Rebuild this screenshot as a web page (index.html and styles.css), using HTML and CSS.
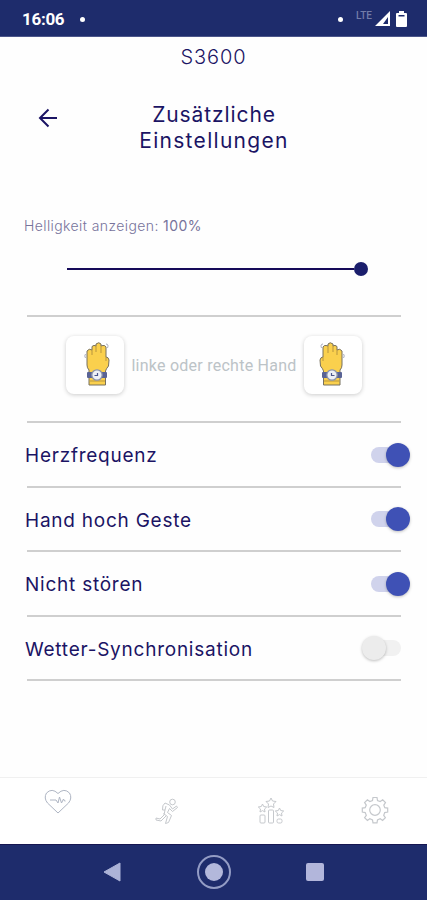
FILE: index.html
```html
<!DOCTYPE html>
<html lang="de">
<head>
    <meta charset="UTF-8">
    <meta name="viewport" content="width=device-width, initial-scale=1">
    <title>Zusätzliche Einstellungen</title>
    <link rel="stylesheet" href="styles.css">
</head>
<body>
<svg width="0" height="0" class="sprite">
    <symbol id="hand" viewBox="0 0 28 46">
        <path d="M6 28V43H22.500V29Q23 27 25.500 24L26 18Q25.500 15 23 15V5Q22 3 20 3.500L18 4V2Q16-.500 13 2V4Q11 2.500 9 4.500V8Q6 6 4 9V23Q4 26 6 28Z" fill="#fad04d" stroke="#77705f" stroke-width="1"/>
        <path d="M9 8v5M13 4v6M18 4v7M23 15v4M7 39h15" fill="none" stroke="#b8953e" stroke-width="1"/>
        <path d="M23 2q3 0 1.500 4M2.500 12q-1.500 2 0 4" fill="none" stroke="#aaaec0" stroke-width="1"/>
        <rect x="4" y="30" width="20" height="6" rx="1" fill="#596395"/>
        <circle cx="14" cy="33" r="5.200" fill="#eef0f6" stroke="#8991aa" stroke-width="1.300"/>
        <path d="M14.500 31v2.500h-3" fill="none" stroke="#4c568c" stroke-width="1.200"/>
    </symbol>
</svg>

<header class="status-bar">
    <span class="clock">16:06</span>
    <span class="dot"></span>
    <span class="dot dot-right"></span>
    <span class="lte">LTE</span>
    <svg class="signal" width="16" height="16" viewBox="0 0 16 16"><path fill-rule="evenodd" d="M15 0V15H0ZM13 6L8 13H13Z" fill="#fff"/></svg>
    <svg class="battery" width="11" height="16" viewBox="0 0 11 16"><path d="M3 0h5v2h2q1 0 1 1v12q0 1-1 1H1q-1 0-1-1V3q0-1 1-1h2z" fill="#fff"/><path d="M2.500 4h6v1.500h-6z" fill="#1e2c6c"/></svg>
</header>

<main class="content">
    <div class="device">S3600</div>
    <div class="title-row">
        <svg class="back" width="20" height="20" viewBox="0 0 20 20"><path d="M10.500 1.500L2 10l8.500 8.500M2 10h17" fill="none" stroke="#1b1464" stroke-width="2"/></svg>
        <h1>Zusätzliche<br><span class="title-wide">Einstellungen</span></h1>
    </div>

    <section class="brightness">
        <p>Helligkeit anzeigen: <b>100%</b></p>
        <div class="slider"><span class="slider-line"></span><span class="slider-thumb"></span></div>
    </section>

    <section class="hands">
        <button class="hand-card"><svg width="28" height="46"><use href="#hand"/></svg></button>
        <span>linke oder rechte Hand</span>
        <button class="hand-card right"><svg width="28" height="46"><use href="#hand"/></svg></button>
    </section>

    <section class="options">
        <div class="option"><span>Herzfrequenz</span><i class="switch on"></i></div>
        <div class="option"><span>Hand hoch Geste</span><i class="switch on"></i></div>
        <div class="option"><span>Nicht stören</span><i class="switch on"></i></div>
        <div class="option"><span>Wetter-Synchronisation</span><i class="switch off"></i></div>
    </section>
</main>

<nav class="tabs">
    <svg class="tab-heart" width="28" height="26" viewBox="0 0 28 26">
        <path d="M14 24L3.500 14Q-.500 9 2.500 4Q8-1.500 14 4.500Q20-1.500 25.500 4Q28.500 9 24.500 14Z"/>
        <path d="M6 11h6l2 3 1.500-6 2 6 2-4 1 2h1"/>
    </svg>
    <svg class="tab-run" width="24" height="26" viewBox="0 0 24 26">
        <circle cx="17.500" cy="4" r="2.800"/>
        <path d="M14.500 7L10 5Q7 7 7.500 12L10 12 11 8M14.500 7l3 4 4-3 1 1.500-5 4-3-3-2 4 4 3-3 7-3 1 2-7-4-3M10 12l-1 5-4 4-4-1v2l5 1 5-5"/>
    </svg>
    <svg class="tab-stats" width="28" height="28" viewBox="0 0 28 28">
        <path d="M14 1l1.500 3 3.500.5-2.500 2.500.5 3.500-3-1.500-3 1.500.500-3.500L9 4.500l3.500-.500zM5.500 7l1.200 2.500 3 .500-2.200 2 .500 3-2.500-1.400L3 15l.500-3-2.200-2 3-.500zM22.500 11l1.200 2.500 3 .500-2.200 2 .500 3-2.500-1.400L20 19l.500-3-2.200-2 3-.500z"/>
        <rect x="3" y="18" width="5" height="8" rx="1"/><rect x="11.500" y="13" width="5" height="13" rx="1"/><rect x="20" y="22" width="5" height="4" rx="1.500"/>
    </svg>
    <svg class="tab-gear" width="28" height="28" viewBox="0 0 28 28">
        <path d="M11.500 4.500L12 1.500h4l.500 3 2.700 1.100L21.700 3.800l2.800 2.800-1.700 2.500 1 2.500 2.900.500v4l-3 .500-1 2.700 1.700 2.400-2.800 2.800-2.400-1.700-2.700 1.200-.500 2.900h-4l-.500-2.900-2.700-1.200L6.400 24.500l-2.800-2.800 1.700-2.400-1.100-2.700-2.900-.500v-4l2.900-.500 1.100-2.500-1.700-2.500 2.800-2.800 2.400 1.800z"/>
        <circle cx="14" cy="14" r="5.300"/>
    </svg>
</nav>

<footer class="system-nav">
    <svg width="18" height="20" viewBox="0 0 18 20"><path d="M17 1v18L1 10z" fill="#acb3d7" stroke="#acb3d7" stroke-linejoin="round"/></svg>
    <svg width="36" height="36" viewBox="0 0 36 36"><circle cx="18" cy="18" r="16" fill="none" stroke="#939cc5" stroke-width="2"/><circle cx="18" cy="18" r="9" fill="#b3b8db"/></svg>
    <span class="recent"></span>
</footer>
</body>
</html>
```
FILE: styles.css
```css
:root {
    --bar: #1e2c6c;
    --text: #1b1464;
    --line: #cfcfcf;
}

* {
    box-sizing: border-box;
}

body {
    margin: 0;
    width: 427px;
    height: 900px;
    display: flex;
    flex-direction: column;
    overflow: hidden;
    background: #fefefe;
    color: var(--text);
    font-family: Inter, sans-serif;
}

.sprite {
    display: none;
}

svg {
    display: block;
    flex: none;
}

.status-bar {
    height: 37px;
    padding: 2px 20px 0 22px;
    display: flex;
    align-items: center;
    background: var(--bar);
    border-bottom: 1px solid #4c568a;
    color: #fff;
}

.clock {
    width: 58px;
    font: bold 17px Roboto, sans-serif;
    letter-spacing: -0.3px;
}

.dot {
    width: 5px;
    height: 5px;
    border-radius: 50%;
    background: #fff;
}

.dot-right {
    margin-left: auto;
}

.lte {
    margin: -7px 2px 0 13px;
    font: 500 10px Roboto, sans-serif;
    color: #737ca8;
}

.signal {
    margin-left: 1px;
}

.battery {
    margin-left: 5px;
}

.content {
    height: 740px;
}

.device {
    height: 41px;
    text-align: center;
    font-size: 20px;
    font-weight: 300;
    line-height: 41px;
    letter-spacing: 0.9px;
}

.title-row {
    height: 122px;
    padding: 23px 0 0 38px;
    display: flex;
}

.back {
    margin-top: 7px;
}

h1 {
    width: 250px;
    margin: 1px 0 0 31px;
    text-align: center;
    font-size: 21px;
    font-weight: 400;
    line-height: 26px;
    letter-spacing: 0.9px;
}

.title-wide {
    letter-spacing: 1.3px;
}

.brightness {
    height: 115px;
    padding: 16px 24px 0;
    color: #77739b;
}

.brightness p {
    margin: 0;
    font-size: 14px;
    font-weight: 300;
    line-height: 20px;
    letter-spacing: 0.4px;
}

.brightness b {
    font-weight: 400;
}

.slider {
    margin: 26px 0 0 43px;
    width: 301px;
    display: flex;
    align-items: center;
}

.slider-line {
    flex: 1;
    height: 2px;
    background: #160b59;
}

.slider-thumb {
    width: 14px;
    height: 14px;
    border-radius: 50%;
    background: #1b1e6c;
}

.hands {
    height: 106px;
    margin: 0 26px 0 27px;
    padding: 19px 39px 0;
    display: flex;
    justify-content: space-between;
    border-top: 2px solid var(--line);
    color: #bcc3c7;
    font: 16px/60px Roboto, sans-serif;
    letter-spacing: 0.25px;
}

.hand-card {
    width: 58px;
    height: 58px;
    padding: 0 0 0 3px;
    display: flex;
    align-items: center;
    justify-content: center;
    border: 0;
    border-radius: 8px;
    background: #fff;
    box-shadow: 0 1px 4px rgba(0, 0, 0, 0.2);
}

.hand-card.right {
    padding: 0 3px 0 0;
}

.right svg {
    transform: scaleX(-1);
}

.options {
    margin: 0 26px 0 27px;
    border-bottom: 2px solid var(--line);
}

.option {
    height: 64.5px;
    margin-right: -9px;
    margin-left: -2px;
    padding-top: 3px;
    display: flex;
    align-items: center;
    justify-content: space-between;
    background: linear-gradient(var(--line), var(--line)) 2px 0 / 374px 2px no-repeat;
    font-size: 19px;
    letter-spacing: 0.76px;
}

.option span {
    padding-top: 2px;
}

.switch {
    position: relative;
    width: 39px;
    height: 24px;
    display: flex;
    align-items: center;
}

.switch::before {
    content: "";
    width: 24px;
    height: 24px;
    border-radius: 50%;
    background: #ececec;
    box-shadow: 0 1px 3px rgba(0, 0, 0, 0.25);
}

/* track sits behind the thumb */
.switch::after {
    content: "";
    position: absolute;
    z-index: -1;
    top: 4px;
    width: 30px;
    height: 16px;
    border-radius: 8px;
}

.switch.on {
    justify-content: flex-end;
}

.switch.on::before {
    background: #3f51b5;
}

.switch.on::after {
    left: 0;
    background: #d0d3ec;
}

.switch.off {
    margin-right: 9px;
}

.switch.off::after {
    right: 0;
    background: #f1f1f1;
}

.tabs {
    height: 67px;
    padding-left: 44px;
    display: flex;
    align-items: flex-start;
    border-top: 1px solid #f0f0f0;
    background: #fff;
}

.tabs svg {
    fill: none;
    stroke: #c5c8cc;
    stroke-width: 1;
}

.tabs .tab-heart {
    margin-top: 11px;
    stroke: #aeb5c3;
}

.tab-run {
    margin: 20px 0 0 83px;
}

.tab-stats {
    margin: 19px 0 0 78px;
}

.tab-gear {
    margin: 18px 0 0 76px;
}

.tabs .tab-gear {
    stroke-width: 1.2;
}

.system-nav {
    height: 56px;
    padding: 0 103px 2px;
    display: flex;
    align-items: center;
    justify-content: space-between;
    background: var(--bar);
    border-top: 1px solid #161651;
}

.recent {
    width: 18px;
    height: 18px;
    border-radius: 2px;
    background: #b2b6db;
}
```
